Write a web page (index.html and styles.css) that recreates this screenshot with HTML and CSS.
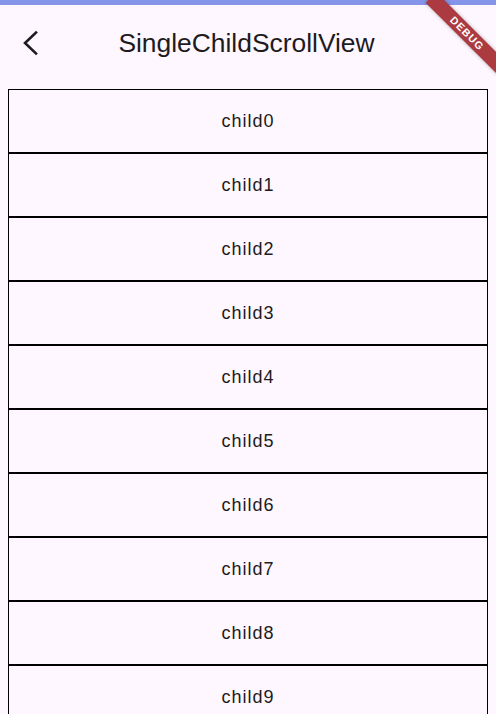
FILE: index.html
```html
<!DOCTYPE html>
<html>
<head>
<meta charset="utf-8">
<link rel="stylesheet" href="styles.css">
</head>
<body>
<div class="status"></div>
<header class="appbar">
  <button class="back" aria-label="Back">
    <svg width="24" height="28" viewBox="0 0 24 28"><polyline points="18,3.5 7,14 18,24.5" fill="none" stroke="#1d1b20" stroke-width="2.6" stroke-linecap="square"/></svg>
  </button>
  <h1 class="title">SingleChildScrollView</h1>
</header>
<main class="list">
  <div class="item">child0</div>
  <div class="item">child1</div>
  <div class="item">child2</div>
  <div class="item">child3</div>
  <div class="item">child4</div>
  <div class="item">child5</div>
  <div class="item">child6</div>
  <div class="item">child7</div>
  <div class="item">child8</div>
  <div class="item">child9</div>
</main>
<div class="banner"><span>DEBUG</span></div>
</body>
</html>
```
FILE: styles.css
```css
html, body {
  margin: 0;
  padding: 0;
  height: 100%;
  overflow: hidden;
  background: #fef7ff;
  font-family: "Liberation Sans", Arial, sans-serif;
  color: #1d1b20;
}
.status {
  height: 5px;
  background: #8494e9;
}
.appbar {
  height: 76px;
  display: flex;
  align-items: center;
  position: relative;
}
.back {
  border: 0;
  background: none;
  padding: 0;
  margin-left: 18px;
  width: 24px;
  height: 28px;
  display: flex;
  align-items: center;
  justify-content: center;
}
.title {
  margin: 0;
  font-weight: 400;
  font-size: 26.4px;
  flex: 1;
  text-align: center;
  padding-right: 45px;
  margin-top: 0;
  line-height: 1;
}
.list {
  margin: 8px 8px 0 8px;
  display: flex;
  flex-direction: column;
}
.item {
  height: 62px;
  border: 1px solid #000;
  display: flex;
  align-items: center;
  justify-content: center;
  font-size: 18px;
  letter-spacing: 1px;
  color: #1d1b20;
}
.banner {
  position: absolute;
  left: 416px;
  top: 26px;
  width: 102px;
  height: 15px;
  background: #ab3a41;
  box-shadow: 0 0 4px rgba(0, 0, 0, 0.3);
  transform: rotate(45deg);
  display: flex;
  align-items: center;
  justify-content: center;
}
.banner span {
  color: #fff;
  font-size: 10.5px;
  font-weight: 700;
  line-height: 1;
  letter-spacing: 1px;
}
```
